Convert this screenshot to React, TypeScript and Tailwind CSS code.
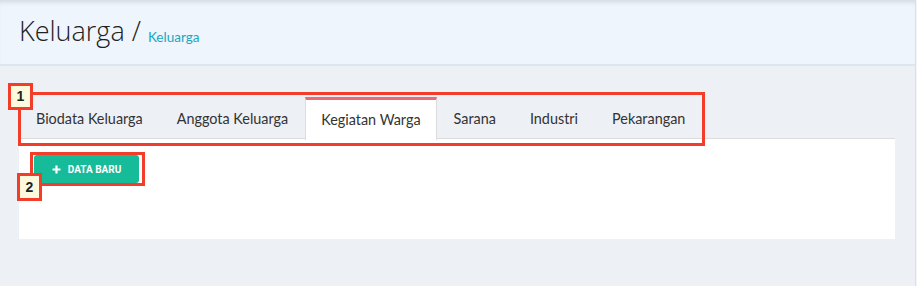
import React from "react";

const tabs = ["Biodata Keluarga", "Anggota Keluarga", "Kegiatan Warga", "Sarana", "Industri", "Pekarangan"];

export default function App() {
  return (
    <div className="relative w-[917px] h-[286px] overflow-hidden bg-[#f4f5f7] font-['Lato',sans-serif]">
      <div className="w-[916px] h-[286px] bg-[#edf0f5] border-r border-[#dcdfe5] flex flex-col">
        <div className="h-[66px] shrink-0 bg-[#eef5fd] border-b-2 border-[#dde5ef] shadow-[inset_0_5px_5px_-3px_rgba(0,0,0,0.12)] flex items-end px-[19px] pb-[17px]">
          <span className="font-['Open_Sans',sans-serif] font-light text-[27px] leading-[32px] text-[#222]">Keluarga /</span>
          <span className="ml-[7px] mb-[2px] text-[13.5px] leading-[16px] text-[#1aa7bd]">Keluarga</span>
        </div>
        <div className="pl-[19px] pr-[20px] pt-[31px]">
          <div className="flex h-[42px] border-b border-[#dcdcdc]">
            {tabs.map((t) => {
              const active = t === "Kegiatan Warga";
              return (
                <div
                  key={t}
                  className={
                    active
                      ? "flex items-center px-[15px] bg-white border-t-[3px] border-t-[#ea6a78] border-x border-x-[#dcdcdc] -mb-px h-[43px] text-[14.4px] text-[#333]"
                      : "flex items-center px-[17px] text-[14.4px] text-[#333] pt-[3px]"
                  }
                >
                  {t}
                </div>
              );
            })}
          </div>
          <div className="bg-white h-[100px] px-[15px] pt-[16px]">
            <button className="flex items-center justify-center gap-[7px] w-[105px] h-[28px] rounded-[3px] bg-[#16bb9a] text-white text-[10px] font-bold font-['Roboto',sans-serif]">
              <svg width="9" height="9" viewBox="0 0 9 9"><path d="M4.5 0.5v8M0.5 4.5h8" stroke="white" strokeWidth="2.2" /></svg>
              DATA BARU
            </button>
          </div>
        </div>
      </div>

      {/* annotation overlays */}
      <div className="absolute left-[18px] top-[92px] w-[687px] h-[54px] border-[3px] border-[#f23d2a]" />
      <div className="absolute left-[8px] top-[83px] w-[25px] h-[27px] border-[3px] border-[#f23d2a] bg-[#fdf9dd] flex items-center justify-center text-[14px] font-bold text-[#222] font-['Liberation_Sans',sans-serif]">1</div>
      <div className="absolute left-[30px] top-[152px] w-[115px] h-[34px] border-[3px] border-[#f23d2a]" />
      <div className="absolute left-[17px] top-[173px] w-[25px] h-[28px] border-[3px] border-[#f23d2a] bg-[#fdf9dd] flex items-center justify-center text-[14px] font-bold text-[#222] font-['Liberation_Sans',sans-serif]">2</div>
    </div>
  );
}
